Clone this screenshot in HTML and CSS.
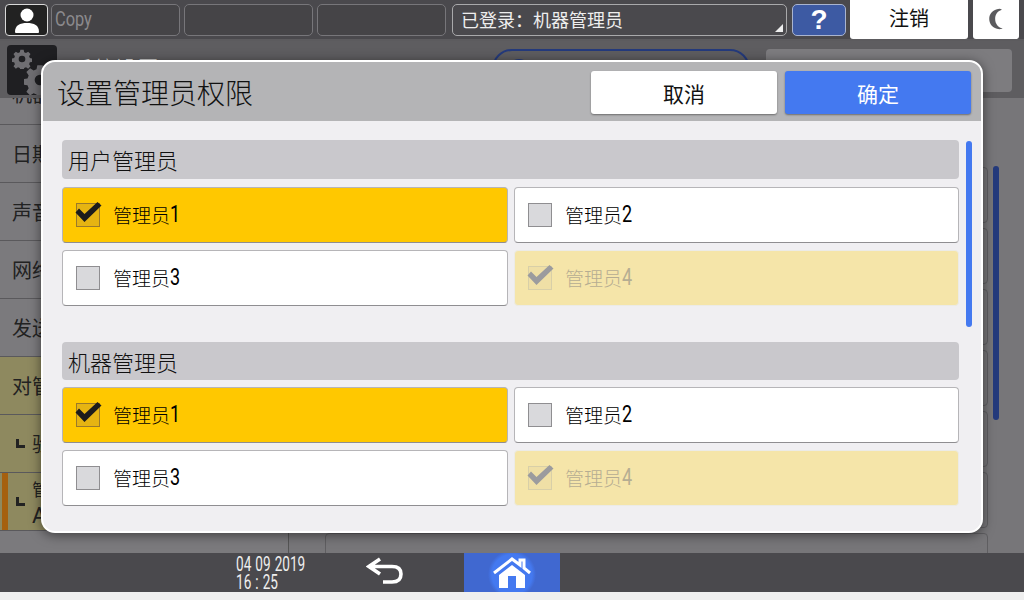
FILE: index.html
```html
<!DOCTYPE html>
<html lang="zh-CN">
<head>
    <meta charset="UTF-8">
    <title>设置管理员权限</title>
    <link rel="stylesheet" href="styles.css">
</head>
<body>
    <svg class="defs" width="0" height="0">
        <symbol id="tick" viewBox="0 0 28 22">
            <path d="M1.5 11.5 L5 7.5 L10.5 13 L23.5 1 L27.5 4.5 L10.5 21 Z"/>
        </symbol>
        <symbol id="gear" viewBox="0 0 24 24">
            <path fill-rule="evenodd" d="M10 1h4l.6 3 2.2.9 2.6-1.7 2.8 2.8-1.7 2.6.9 2.2 3 .6v4l-3 .6-.9 2.2 1.7 2.6-2.8 2.8-2.6-1.7-2.2.9-.6 3h-4l-.6-3-2.2-.9-2.6 1.7-2.8-2.8 1.7-2.6-.9-2.2-3-.6v-4l3-.6.9-2.2-1.7-2.6 2.8-2.8 2.6 1.7 2.2-.9z M12 8a4 4 0 1 0 0 8 4 4 0 0 0 0-8z"/>
        </symbol>
    </svg>

    <div class="screen">
        <!-- Top status bar -->
        <header class="topbar">
            <div class="user-btn">
                <svg width="30" height="28" viewBox="0 0 30 28"><circle cx="15" cy="9" r="6.5" fill="#fff"/><path d="M3 26c0-7 5-9 12-9s12 2 12 9c0 1-1 1-2 1H5c-1 0-2 0-2-1z" fill="#fff"/></svg>
            </div>
            <div class="job-btn job-copy"><span class="copy-text">Copy</span></div>
            <div class="job-btn"></div>
            <div class="job-btn"></div>
            <div class="login-box">已登录<span class="login-colon">：</span>机器管理员<span class="login-corner"></span></div>
            <div class="help-btn">?</div>
            <div class="logout-btn">注销</div>
            <div class="sleep-btn">
                <svg width="18" height="22" viewBox="0 0 18 26"><path d="M13 1C5 2 1 7 1 13s4 11 12 12c2 0 4-.5 4-.5C11 23 8 18 8 13S10 4 16 2c-1-.6-2-1-3-1z" fill="#5b5b5e"/></svg>
            </div>
        </header>

        <!-- Settings page behind the dialog -->
        <section class="page">
            <div class="page-head">
                <div class="page-icon">
                    <svg class="gear-small"><use href="#gear"/></svg>
                    <svg class="gear-big"><use href="#gear"/></svg>
                </div>
                <div class="page-title">系统设置</div>
                <div class="page-pill"><span class="pill-dot"></span></div>
                <div class="page-box"></div>
            </div>
            <div class="page-main">
                <ul class="side-list">
                    <li class="side-first"><span>机器</span></li>
                    <li>日期</li>
                    <li>声音</li>
                    <li>网络</li>
                    <li>发送</li>
                    <li class="side-on">对管</li>
                    <li class="side-on side-sub"><i class="corner"></i>验证</li>
                    <li class="side-on side-sub side-cur"><i class="corner"></i><span class="side-two">管理<br><b class="side-latin">A</b></span></li>
                    <li class="side-last">IPP 地址设置</li>
                </ul>
                <div class="row-list">
                    <div class="row"></div>
                    <div class="row"></div>
                    <div class="row"></div>
                    <div class="row"></div>
                    <div class="row"></div>
                    <div class="row"></div>
                    <div class="row"></div>
                </div>
                <div class="page-scroll"></div>
            </div>
        </section>

        <!-- Bottom bar -->
        <footer class="bottombar">
            <div class="clock"><div class="clock-line">04 09 2019</div><div class="clock-line">16 : 25</div></div>
            <div class="back-btn">
                <svg width="38" height="28" viewBox="0 0 38 28"><path d="M14 2 L3 9.5 L14 17 M4 9.5 H26 C32 9.5 35 12 35 17 C35 22 32 25 26 25 H17" fill="none" stroke="#fff" stroke-width="3.6"/></svg>
            </div>
            <div class="home-btn">
                <svg width="38" height="32" viewBox="0 0 38 32"><path d="M1 16 L19 2 L27 8 V3 H31 V11 L37 16" fill="none" stroke="#fff" stroke-width="3"/><path fill-rule="evenodd" d="M19 8 L32 18 V31 H6 V18 Z M15 19 V31 H23 V19 Z" fill="#fff"/></svg>
            </div>
        </footer>
        <div class="bottom-strip"></div>

        <!-- Dialog -->
        <div class="dialog">
            <div class="dialog-head">
                <h1 class="dialog-title">设置管理员权限</h1>
                <button class="btn btn-cancel">取消</button>
                <button class="btn btn-ok">确定</button>
            </div>
            <div class="dialog-body">
                <div class="groups">
                    <div class="group">
                        <h2 class="group-title">用户管理员</h2>
                        <div class="options">
                            <div class="option option-on"><span class="box"><svg class="tick"><use href="#tick"/></svg></span>管理员<span class="num">1</span></div>
                            <div class="option"><span class="box"></span>管理员<span class="num">2</span></div>
                            <div class="option"><span class="box"></span>管理员<span class="num">3</span></div>
                            <div class="option option-off"><span class="box"><svg class="tick"><use href="#tick"/></svg></span>管理员<span class="num">4</span></div>
                        </div>
                    </div>
                    <div class="group">
                        <h2 class="group-title">机器管理员</h2>
                        <div class="options">
                            <div class="option option-on"><span class="box"><svg class="tick"><use href="#tick"/></svg></span>管理员<span class="num">1</span></div>
                            <div class="option"><span class="box"></span>管理员<span class="num">2</span></div>
                            <div class="option"><span class="box"></span>管理员<span class="num">3</span></div>
                            <div class="option option-off"><span class="box"><svg class="tick"><use href="#tick"/></svg></span>管理员<span class="num">4</span></div>
                        </div>
                    </div>
                </div>
                <div class="dialog-scroll"></div>
            </div>
        </div>
    </div>
</body>
</html>
```

FILE: styles.css
```css
* {
    box-sizing: border-box;
}

body {
    margin: 0;
    font-family: "Noto Sans CJK SC", sans-serif;
    font-weight: 300;
    color: #222;
}

.defs {
    position: absolute;
}

.screen {
    position: relative;
    width: 1024px;
    height: 600px;
    overflow: hidden;
    display: flex;
    flex-direction: column;
    background-color: #777679;
}

/* Top bar */
.topbar {
    height: 41px;
    flex: none;
    display: flex;
    align-items: flex-start;
    padding: 4px 5px 0;
    background-color: #4a494d;
    border-bottom: 2px solid #5c5b5e;
}

.user-btn {
    width: 43px;
    height: 32px;
    display: flex;
    align-items: center;
    justify-content: center;
    background-color: #222;
    border: 1px solid #d8d8d8;
    border-radius: 4px;
}

.job-btn {
    width: 129px;
    height: 32px;
    margin-left: 4px;
    padding-left: 3px;
    border: 1px solid #77767a;
    border-radius: 5px;
    background-color: #454447;
}

.job-copy {
    margin-left: 3px;
}

.copy-text {
    display: inline-block;
    color: #8b8a8d;
    font-family: Roboto, sans-serif;
    font-size: 21px;
    font-weight: 400;
    line-height: 29px;
    transform: scaleX(0.78);
    transform-origin: left;
}

.login-box {
    position: relative;
    width: 335px;
    height: 32px;
    margin-left: 6px;
    padding-left: 8px;
    border: 1px solid #a9a9ab;
    border-radius: 5px;
    color: #eee;
    font-size: 18px;
    font-weight: 400;
    line-height: 28px;
}

.login-colon {
    font-family: "Noto Sans CJK TC", sans-serif;
}

.login-corner {
    position: absolute;
    right: 3px;
    bottom: 3px;
    border-left: 8px solid transparent;
    border-bottom: 8px solid #eee;
}

.help-btn {
    width: 54px;
    height: 32px;
    margin-left: 5px;
    border: 1px solid #a9b4d0;
    border-radius: 5px;
    background-color: #3d5aa3;
    color: #fff;
    font-family: "Liberation Sans", sans-serif;
    font-size: 28px;
    font-weight: bold;
    line-height: 30px;
    text-align: center;
}

.logout-btn {
    width: 118px;
    height: 39px;
    margin: -4px 0 0 4px;
    padding-top: 2px;
    background-color: #fff;
    border-radius: 0 0 3px 3px;
    font-size: 20px;
    font-weight: 400;
    line-height: 32px;
    text-align: center;
    color: #111;
}

.sleep-btn {
    width: 46px;
    height: 39px;
    margin: -4px 0 0 5px;
    padding-top: 8px;
    background-color: #fff;
    border-radius: 0 0 3px 3px;
    text-align: center;
}

/* Page behind the dialog */
.page {
    flex: 1;
    min-height: 0;
    display: flex;
    flex-direction: column;
}

.page-head {
    height: 57px;
    flex: none;
    display: flex;
    align-items: flex-start;
    padding: 4px 12px 0 7px;
    background-color: #5e5d60;
}

.page-icon {
    position: relative;
    width: 50px;
    height: 50px;
    flex: none;
    background-color: #1f1f22;
    border-radius: 4px;
    overflow: hidden;
}

.gear-small,
.gear-big {
    position: absolute;
    fill: #6f6e72;
}

.gear-small {
    left: 5px;
    top: 4px;
    width: 20px;
    height: 20px;
}

.gear-big {
    left: 17px;
    top: 19px;
    width: 32px;
    height: 32px;
}

.page-title {
    width: 96px;
    margin: 6px 0 0 14px;
    flex: none;
    font-size: 22px;
    color: #ddd;
}

.page-pill {
    width: 258px;
    height: 40px;
    margin: 4px 0 0 325px;
    flex: none;
    padding: 8px 0 0 14px;
    background-color: #5e5d60;
    border: 2px solid #243a7c;
    border-radius: 20px;
}

.pill-dot {
    display: block;
    width: 22px;
    height: 22px;
    border: 2px solid #243a7c;
    border-radius: 50%;
}

.page-box {
    width: 246px;
    height: 43px;
    margin: 4px 0 0 16px;
    flex: none;
    background-color: #7d7c7f;
    border-radius: 4px;
}

.page-main {
    flex: 1;
    min-height: 0;
    display: flex;
}

.side-list {
    width: 289px;
    flex: none;
    margin: 0;
    padding: 0;
    list-style: none;
    border-right: 1px solid #555;
}

.side-list li {
    height: 58px;
    display: flex;
    align-items: center;
    padding-left: 12px;
    overflow: hidden;
    background-color: #7b7a7d;
    border-bottom: 1px solid #5a595c;
    font-size: 20px;
    font-weight: 400;
}

.side-list .side-first {
    height: 27px;
    align-items: flex-start;
}

.side-first span {
    margin-top: -19px;
}

.side-list .side-last {
    height: 22px;
    align-items: flex-start;
    padding-top: 17px;
    border-bottom: none;
}

.side-list .side-on {
    background-color: #8e895f;
}

.side-list .side-sub {
    padding-left: 16px;
}

.side-list .side-cur {
    background: linear-gradient(to right, #8e895f 2px, #a5600f 2px 8px, #8e895f 8px);
}

.side-two {
    font-size: 17px;
    line-height: 27px;
}

.side-latin {
    font-family: Roboto, sans-serif;
    font-size: 22px;
    font-weight: 400;
}

.corner {
    width: 9px;
    height: 9px;
    margin-right: 7px;
    border-left: 3px solid #222;
    border-bottom: 3px solid #222;
}

.row-list {
    flex: 1;
    padding: 69px 0 0 36px;
    overflow: hidden;
}

.row {
    height: 56px;
    margin-bottom: 5px;
    background-color: #777679;
    border: 1px solid #5f5e61;
    border-radius: 4px;
}

.page-scroll {
    width: 6px;
    height: 254px;
    margin: 68px 25px 0 5px;
    flex: none;
    background-color: #243a7c;
    border-radius: 3px;
}

/* Bottom bar */
.bottombar {
    height: 39px;
    flex: none;
    display: flex;
    background-color: #4a494d;
}

.clock {
    width: 130px;
    margin-left: 236px;
    padding-top: 2px;
}

.clock-line {
    height: 18px;
    color: #eee;
    font-family: Roboto, sans-serif;
    font-size: 20px;
    font-weight: 400;
    line-height: 18px;
    word-spacing: 1px;
    white-space: nowrap;
    transform: scaleX(0.68);
    transform-origin: left;
}

.back-btn {
    width: 98px;
    padding-top: 4px;
}

.home-btn {
    width: 96px;
    padding-top: 4px;
    text-align: center;
    background: radial-gradient(circle at 50% 55%, #4479f0 0 20px, #4068d0 24px);
}

.bottom-strip {
    height: 8px;
    flex: none;
    background-color: #efefef;
}

/* Dialog */
.dialog {
    position: absolute;
    left: 41px;
    top: 60px;
    width: 942px;
    height: 473px;
    overflow: hidden;
    background-color: #f0eff2;
    border: 2px solid #fff;
    border-radius: 14px;
    box-shadow: 0 2px 12px rgba(0, 0, 0, 0.5);
}

.dialog-head {
    height: 59px;
    display: flex;
    align-items: flex-start;
    padding: 9px 10px 0 14px;
    background-color: #b4b4b6;
}

.dialog-title {
    flex: 1;
    margin: 0;
    font-size: 28px;
    font-weight: 300;
    line-height: 42px;
    color: #111;
}

.btn {
    width: 186px;
    height: 43px;
    margin-left: 8px;
    border: none;
    border-radius: 3px;
    font-family: inherit;
    font-size: 21px;
    font-weight: 400;
    box-shadow: 0 1px 2px rgba(0, 0, 0, 0.4);
}

.btn-cancel {
    background-color: #fff;
    color: #111;
}

.btn-ok {
    background-color: #4479f0;
    color: #fff;
}

.dialog-body {
    display: flex;
    padding: 19px 0 0 19px;
}

.groups {
    width: 897px;
    flex: none;
}

.group {
    margin-bottom: 36px;
}

.group-title {
    height: 39px;
    margin: 0 0 8px;
    padding-left: 6px;
    background-color: #c9c8cc;
    border-radius: 4px;
    font-size: 22px;
    font-weight: 300;
    line-height: 39px;
    color: #111;
}

.group + .group .group-title {
    height: 38px;
    margin-top: 1px;
    margin-bottom: 7px;
}

.options {
    display: grid;
    grid-template-columns: 446px 445px;
    column-gap: 6px;
    row-gap: 7px;
}

.option {
    height: 56px;
    display: flex;
    align-items: center;
    padding: 0 0 2px 13px;
    background-color: #fff;
    border: 1px solid #b6b5b8;
    border-bottom-color: #8f8e91;
    border-radius: 4px;
    font-size: 19px;
    color: #000;
}

.option-on {
    background-color: #ffc800;
}

.option-off {
    background-color: #f5e5a9;
    border: 1px solid #ecebe6;
    color: #b5ad92;
}

.num {
    display: inline-block;
    width: 11px;
    font-family: Roboto, sans-serif;
    font-size: 24px;
    font-weight: 400;
    transform: scaleX(0.75);
    transform-origin: left;
}

.box {
    position: relative;
    width: 24px;
    height: 24px;
    margin: 2px 13px 0 0;
    flex: none;
    background-color: #d9d9dc;
    border: 1px solid #8f8e91;
}

.option-on .box {
    background-color: #e6b412;
    border-color: #9a7a2a;
}

.option-off .box {
    background-color: #efdfa6;
    border-color: #d8cfa8;
}

.tick {
    position: absolute;
    left: -3px;
    top: -3px;
    width: 28px;
    height: 22px;
    fill: #1c1c1c;
}

.option-off .tick {
    fill: #9b9b9e;
}

.dialog-scroll {
    width: 6px;
    height: 186px;
    margin: 1px 0 0 7px;
    flex: none;
    background-color: #4479f0;
    border-radius: 3px;
}
```
